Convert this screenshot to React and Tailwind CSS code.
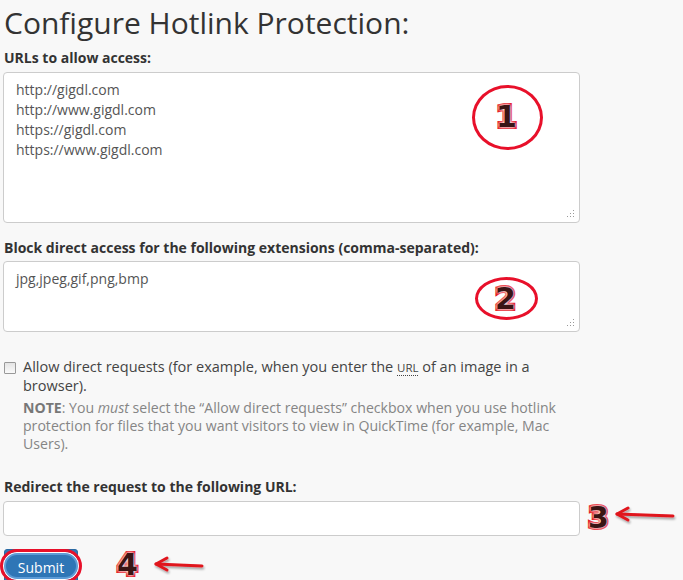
import React from "react";

function Num({ children, className }) {
  return (
    <span
      className={`absolute font-['DejaVu_Sans'] font-bold text-[30px] leading-[28px] text-[#3a1414] ${className}`}
      style={{ WebkitTextStroke: "4px #e3141f", paintOrder: "stroke fill", textShadow: "0 0 3px #fff, 0 0 3px #fff" }}
    >
      {children}
    </span>
  );
}

function Arrow({ className, w = 62 }) {
  return (
    <svg className={`absolute ${className}`} width={w} height="20" viewBox={`0 0 ${w} 20`}>
      <defs>
        <filter id="sh" x="-20%" y="-50%" width="140%" height="200%">
          <feDropShadow dx="1" dy="2" stdDeviation="1.2" floodColor="#000" floodOpacity="0.35" />
        </filter>
      </defs>
      <g filter="url(#sh)" fill="none" stroke="#e0141e" strokeWidth="3" strokeLinecap="round" strokeLinejoin="round">
        <path d={`M4 9 L${w - 4} 11`} />
        <path d="M15 3 L4 9 L15 15" />
      </g>
    </svg>
  );
}

function Resize() {
  return (
    <svg className="absolute right-[4px] bottom-[4px]" width="8" height="8" viewBox="0 0 8 8">
      <g fill="#999">
        <rect x="6" y="0" width="1" height="1" />
        <rect x="3" y="3" width="1" height="1" />
        <rect x="6" y="3" width="1" height="1" />
        <rect x="0" y="6" width="1" height="1" />
        <rect x="3" y="6" width="1" height="1" />
        <rect x="6" y="6" width="1" height="1" />
      </g>
    </svg>
  );
}

function Label({ children, className = "" }) {
  return <div className={`pl-[1px] text-[14px] leading-[18px] font-bold text-[#333] ${className}`}>{children}</div>;
}

export default function App() {
  return (
    <div className="relative w-[683px] h-[580px] overflow-hidden bg-[#f8f8f8] font-['Open_Sans',sans-serif] text-[#333]">
      <div className="flex flex-col pl-[3px] w-[580px]">
        <h1 className="pl-[1px] pt-[5px] text-[30px] leading-[36px] font-normal text-[#333]">
          Configure Hotlink Protection:
        </h1>
        <Label className="mt-[8px]">URLs to allow access:</Label>
        <div className="relative mt-[5px] h-[151px] border border-[#ccc] rounded-[4px] bg-white px-[12px] pt-[7px] text-[14px] leading-[20px] text-[#555]">
          <div>http://gigdl.com</div>
          <div>http://www.gigdl.com</div>
          <div>https://gigdl.com</div>
          <div>https://www.gigdl.com</div>
          <Resize />
        </div>
        <Label className="mt-[16px]">Block direct access for the following extensions (comma-separated):</Label>
        <div className="relative mt-[4px] h-[71px] border border-[#ccc] rounded-[4px] bg-white px-[12px] pt-[7px] text-[14px] leading-[20px] text-[#555]">
          jpg,jpeg,gif,png,bmp
          <Resize />
        </div>
        <div className="mt-[26px] flex items-start gap-[7px]">
          <span className="mt-[4px] ml-[1px] w-[12px] h-[12px] shrink-0 border border-[#999] rounded-[1px] bg-gradient-to-b from-[#e4e4e4] to-[#fafafa]" />
          <div className="flex flex-col gap-[4px]">
            <div className="text-[14.5px] leading-[18px] text-[#444]">
              Allow direct requests (for example, when you enter the{" "}
              <abbr className="no-underline border-b border-dotted border-[#444] text-[11.5px]">URL</abbr> of an image in a browser).
            </div>
            <div className="text-[14.1px] leading-[18px] text-[#858585]">
              <b className="text-[#777]">NOTE</b>: You <i>must</i> select the “Allow direct requests” checkbox when you use hotlink
              protection for files that you want visitors to view in QuickTime (for example, Mac Users).
            </div>
          </div>
        </div>
        <Label className="mt-[25px]">Redirect the request to the following URL:</Label>
        <div className="mt-[5px] h-[35px] border border-[#ccc] rounded-[4px] bg-white" />
        <div className="mt-[13px] pl-[1px] flex">
          <button className="h-[38px] w-[74px] pb-[1px] rounded-[3px] bg-[#2f76b6] text-white text-[14px] leading-[20px] border border-[#2a6aa3]">
            Submit
          </button>
        </div>
      </div>

      {/* annotations */}
      <div className="absolute left-[472px] top-[85px] w-[71px] h-[65px] rounded-[50%] border-[3px] border-[#e8102a]" />
      <Num className="left-[496px] top-[103px]">1</Num>
      <div className="absolute left-[475px] top-[277px] w-[63px] h-[43px] rounded-[50%] border-[3px] border-[#e8102a]" />
      <Num className="left-[495px] top-[285px]">2</Num>
      <Num className="left-[588px] top-[504px]">3</Num>
      <Arrow className="left-[613px] top-[505px]" w={64} />
      <div className="absolute left-[0px] top-[549px] w-[82px] h-[34px] rounded-[17px] border-[3px] border-[#e8102a] shadow-[inset_0_0_0_1px_#fff,inset_0_0_0_3px_#5d9bd6]" />
      <Num className="left-[117px] top-[551px]">4</Num>
      <Arrow className="left-[152px] top-[555px]" w={54} />
    </div>
  );
}
